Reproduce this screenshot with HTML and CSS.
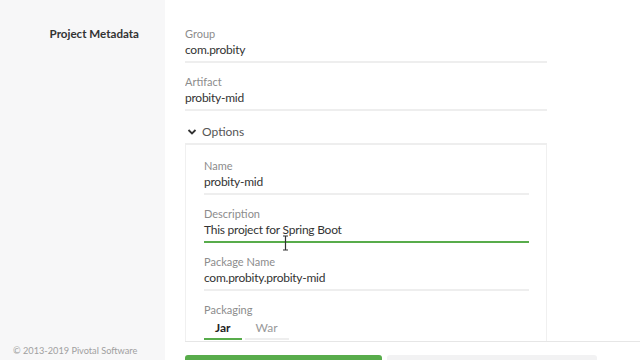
FILE: index.html
```html
<!DOCTYPE html>
<html>
<head>
<meta charset="utf-8">
<link rel="stylesheet" href="styles.css">
</head>
<body>
<div class="page">
  <aside class="sidebar">
    <div class="section-title">Project Metadata</div>
    <div class="copyright">© 2013-2019 Pivotal Software</div>
  </aside>
  <main class="main">
    <div class="form">
      <div class="field">
        <div class="label">Group</div>
        <div class="value">com.probity</div>
      </div>
      <div class="field">
        <div class="label">Artifact</div>
        <div class="value">probity-mid</div>
      </div>
      <div class="options-toggle">
        <svg class="chevron" width="10" height="8" viewBox="0 0 10 8"><path d="M1.5 2 L5 5.5 L8.5 2" fill="none" stroke="#333" stroke-width="1.8"/></svg>
        <span>Options</span>
      </div>
      <div class="options-box">
        <div class="field">
          <div class="label">Name</div>
          <div class="value">probity-mid</div>
        </div>
        <div class="field active">
          <div class="label">Description</div>
          <div class="value">This project for Spring Boot</div>
          <svg class="ibeam" width="7" height="16" viewBox="0 0 7 16"><path d="M1 1 H6 M3.5 1 V15 M1 15 H6" fill="none" stroke="#333" stroke-width="1.2"/></svg>
        </div>
        <div class="field">
          <div class="label">Package Name</div>
          <div class="value">com.probity.probity-mid</div>
        </div>
        <div class="field radio-field">
          <div class="label">Packaging</div>
          <div class="tabs">
            <span class="tab selected">Jar</span>
            <span class="tab">War</span>
          </div>
        </div>
      </div>
    </div>
    <div class="actions">
      <div class="btn btn-primary"></div>
      <div class="btn btn-secondary"></div>
    </div>
  </main>
</div>
</body>
</html>
```
FILE: styles.css
```css
* { box-sizing: border-box; }
html, body { margin: 0; padding: 0; }
body {
  font-family: Lato, "Noto Sans", sans-serif;
  color: #333;
  background: #fff;
  width: 640px;
  height: 360px;
  overflow: hidden;
}
.page {
  display: flex;
  height: 360px;
}
.sidebar {
  width: 165px;
  flex: none;
  background: #f7f7f8;
  display: flex;
  flex-direction: column;
  justify-content: space-between;
  padding: 27px 26px 2px 13px;
}
.section-title {
  text-align: right;
  font-weight: 700;
  font-size: 11.6px;
  line-height: 14px;
  color: #333;
}
.copyright {
  font-size: 9.2px;
  line-height: 14px;
  color: #a0a0a0;
  white-space: nowrap;
}
.main {
  flex: 1;
  display: flex;
  flex-direction: column;
  padding-left: 20px;
}
.form {
  width: 362px;
  padding-top: 15px;
  height: 341px;
  overflow: hidden;
  flex: none;
}
.field {
  padding-top: 11px;
  position: relative;
}
.label {
  font-size: 11px;
  line-height: 15px;
  color: #8c8c8c;
}
.value {
  font-size: 12px;
  letter-spacing: -0.25px;
  line-height: 17px;
  color: #333;
  padding-bottom: 3px;
  border-bottom: 2px solid #eeeeee;
}
.field.active .value {
  border-bottom-color: #58ac4b;
}
.ibeam {
  position: absolute;
  left: 78px;
  top: 40px;
}
.options-toggle {
  display: flex;
  align-items: center;
  gap: 5px;
  padding: 13px 0 3px 2px;
  line-height: 16px;
  font-size: 12px;
  color: #555;
  border-bottom: 2px solid #eeeeee;
}
.chevron { flex: none; }
.options-box {
  border-left: 1px solid #f0f0f0;
  border-right: 1px solid #f0f0f0;
  padding: 2px 17px 0 18px;
  height: 196px;
}
.tabs {
  display: flex;
  gap: 3px;
  margin-top: 3px;
}
.tab {
  font-size: 12px;
  line-height: 16px;
  padding: 0 11px 2px;
  color: #999;
  border-bottom: 2px solid #eeeeee;
}
.tab.selected {
  color: #222;
  font-weight: 700;
  border-bottom-color: #58ac4b;
}
.actions {
  border-top: 1px solid #e6e6e6;
  display: flex;
  gap: 5px;
  padding-top: 13px;
  flex: 1;
}
.btn {
  height: 20px;
  border-radius: 3px 3px 0 0;
}
.btn-primary {
  width: 197px;
  background: #58ac4b;
}
.btn-secondary {
  width: 210px;
  background: #f2f2f3;
}
```
